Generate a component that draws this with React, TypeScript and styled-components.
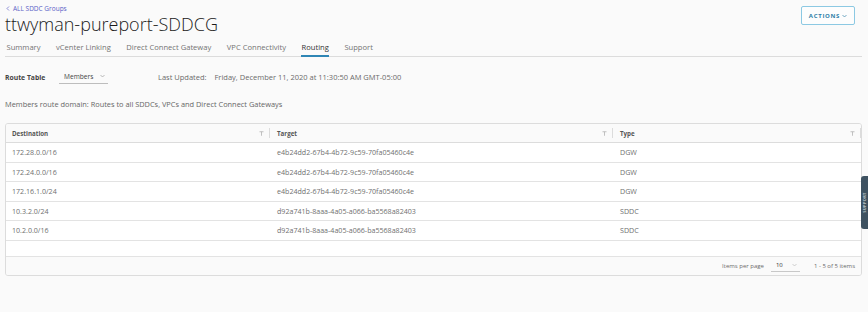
import React from "react";
import styled, { createGlobalStyle } from "styled-components";

const Global = createGlobalStyle`
  html, body { margin: 0; padding: 0; background: #fafafa; }
  body { font-family: "Open Sans", Lato, sans-serif; color: #565656; }
  * { box-sizing: border-box; }
`;

const Page = styled.div`
  width: 868px;
  height: 312px;
  position: relative;
  overflow: hidden;
  background: #fafafa;
  padding: 0 6px 0 5px;
`;

const Header = styled.div`
  display: flex;
  justify-content: space-between;
  align-items: flex-start;
  padding-right: 7px;
`;

const TitleBlock = styled.div`
  display: flex;
  flex-direction: column;
`;

const Breadcrumb = styled.a`
  margin-top: 4px;
  font-size: 6.5px;
  color: #5b5fc7;
  display: flex;
  align-items: center;
  gap: 3px;
  height: 8px;
  padding-left: 1px;
`;

const Title = styled.h1`
  margin: 0;
  font-size: 18px;
  font-weight: 300;
  color: #1b1b1b;
  line-height: 24px;
`;

const ActionsButton = styled.button`
  margin-top: 6px;
  width: 54px;
  height: 19px;
  border: 1px solid #8cc9e3;
  border-radius: 2px;
  background: #fdfdfd;
  color: #2e7fa8;
  font-family: "Open Sans", sans-serif;
  font-weight: 700;
  font-size: 6px;
  letter-spacing: 0.7px;
  display: flex;
  align-items: center;
  justify-content: center;
  gap: 2px;
  padding: 0;
`;

const Tabs = styled.nav`
  display: flex;
  gap: 14.5px;
  margin-top: 7px;
  border-bottom: 1px solid #dcdcdc;
  padding-left: 1px;
`;

const Tab = styled.div<{ $active?: boolean }>`
  font-size: 7.6px;
  color: ${(p) => (p.$active ? "#333" : "#737373")};
  height: 14px;
  line-height: 9px;
  padding: 0 0.5px;
  border-bottom: 2px solid ${(p) => (p.$active ? "#2f86b5" : "transparent")};
  margin-bottom: -1px;
`;

const FilterRow = styled.div`
  display: flex;
  align-items: center;
  margin-top: 13px;
  height: 14px;
`;

const Label = styled.span`
  font-weight: 700;
  font-size: 6.8px;
  color: #444;
  width: 54px;
`;

const Select = styled.div`
  width: 49px;
  height: 13px;
  border-bottom: 1px solid #bdbdbd;
  display: flex;
  align-items: center;
  justify-content: space-between;
  padding: 0 3px 1px 5px;
  color: #444;
  font-size: 6.6px;
  margin-right: 50px;
`;

const Updated = styled.span`
  color: #6b6b6b;
  font-size: 7.5px;
  & b { font-weight: 400; margin-right: 6px; }
`;

const Description = styled.p`
  margin: 15px 0 0 0;
  font-size: 7.4px;
  color: #666;
  line-height: 10px;
`;

const Table = styled.div`
  margin-top: 14px;
  border: 1px solid #dcdcdc;
  border-radius: 3px;
  background: #fff;
  overflow: hidden;
  width: 857px;
`;

const Grid = styled.div`
  display: grid;
  grid-template-columns: 264px 343px 1fr;
`;

const HeadCell = styled.div<{ $first?: boolean }>`
  height: 19px;
  background: #fafafa;
  border-bottom: 1px solid #dcdcdc;
  display: flex;
  align-items: center;
  justify-content: space-between;
  font-size: 6.2px;
  font-weight: 700;
  color: #555;
  padding: 0 6px 0 ${(p) => (p.$first ? "6px" : "7px")};
  position: relative;
  &:not(:last-child)::after {
    content: "";
    position: absolute;
    right: 0;
    top: 4px;
    bottom: 4px;
    width: 1px;
    background: #dcdcdc;
  }
`;

const Cell = styled.div<{ $first?: boolean }>`
  height: 19.5px;
  border-bottom: 1px solid #e3e3e3;
  display: flex;
  align-items: center;
  font-size: 7.1px;
  color: #707070;
  padding-left: ${(p) => (p.$first ? "6px" : "7px")};
`;

const EmptyArea = styled.div`
  height: 15px;
  background: #fff;
`;

const Footer = styled.div`
  height: 19px;
  border-top: 1px solid #e3e3e3;
  background: #fafafa;
  display: flex;
  align-items: center;
  justify-content: flex-end;
  font-size: 6px;
  color: #6a6a6a;
  padding-right: 6px;
`;

const PageSize = styled.div`
  width: 29px;
  height: 12px;
  border-bottom: 1px solid #c8c8c8;
  display: flex;
  align-items: center;
  justify-content: space-between;
  padding: 0 3px 0 5px;
  margin: 0 14px 0 7px;
  color: #333;
  font-size: 6px;
`;

const SupportTab = styled.div`
  position: absolute;
  left: 861px;
  top: 176px;
  width: 7px;
  height: 53px;
  background: #3e5261;
  border-radius: 3px 0 0 3px;
  display: flex;
  align-items: center;
  justify-content: center;
`;

const SupportText = styled.span`
  transform: rotate(-90deg);
  color: #b9c4cc;
  font-size: 4px;
  letter-spacing: 0.3px;
  white-space: nowrap;
  font-weight: 700;
`;

const FilterIcon = () => (
  <svg width="5" height="5" viewBox="0 0 10 10">
    <path d="M1 1.5h8M5 1.5v8" stroke="#b3b3b3" strokeWidth="1.6" fill="none" />
  </svg>
);

const Chevron = ({ color = "#999" }: { color?: string }) => (
  <svg width="5" height="4" viewBox="0 0 10 6">
    <path d="M1 1l4 4 4-4" stroke={color} strokeWidth="1.3" fill="none" />
  </svg>
);

const rows = [
  ["172.28.0.0/16", "e4b24dd2-67b4-4b72-9c59-70fa05460c4e", "DGW"],
  ["172.24.0.0/16", "e4b24dd2-67b4-4b72-9c59-70fa05460c4e", "DGW"],
  ["172.16.1.0/24", "e4b24dd2-67b4-4b72-9c59-70fa05460c4e", "DGW"],
  ["10.3.2.0/24", "d92a741b-8aaa-4a05-a066-ba5568a82403", "SDDC"],
  ["10.2.0.0/16", "d92a741b-8aaa-4a05-a066-ba5568a82403", "SDDC"],
];

const tabs = ["Summary", "vCenter Linking", "Direct Connect Gateway", "VPC Connectivity", "Routing", "Support"];

export default function App() {
  return (
    <>
      <Global />
      <Page>
        <Header>
          <TitleBlock>
            <Breadcrumb>
              <svg width="4" height="5" viewBox="0 0 6 10">
                <path d="M5 1L1 5l4 4" stroke="#5b5fc7" strokeWidth="1.4" fill="none" />
              </svg>
              ALL SDDC Groups
            </Breadcrumb>
            <Title>ttwyman-pureport-SDDCG</Title>
          </TitleBlock>
          <ActionsButton>
            ACTIONS <Chevron color="#2e7fa8" />
          </ActionsButton>
        </Header>
        <Tabs>
          {tabs.map((t) => (
            <Tab key={t} $active={t === "Routing"}>
              {t}
            </Tab>
          ))}
        </Tabs>
        <FilterRow>
          <Label>Route Table</Label>
          <Select>
            Members <Chevron />
          </Select>
          <Updated>
            <b>Last Updated:</b> Friday, December 11, 2020 at 11:30:50 AM GMT-05:00
          </Updated>
        </FilterRow>
        <Description>Members route domain: Routes to all SDDCs, VPCs and Direct Connect Gateways</Description>
        <Table>
          <Grid>
            <HeadCell $first>
              Destination <FilterIcon />
            </HeadCell>
            <HeadCell>
              Target <FilterIcon />
            </HeadCell>
            <HeadCell>
              Type <FilterIcon />
            </HeadCell>
            {rows.map((r, i) => (
              <React.Fragment key={i}>
                <Cell $first>{r[0]}</Cell>
                <Cell>{r[1]}</Cell>
                <Cell>{r[2]}</Cell>
              </React.Fragment>
            ))}
          </Grid>
          <EmptyArea />
          <Footer>
            Items per page
            <PageSize>
              10 <Chevron color="#bbb" />
            </PageSize>
            1 - 5 of 5 items
          </Footer>
        </Table>
        <SupportTab>
          <SupportText>SUPPORT</SupportText>
        </SupportTab>
      </Page>
    </>
  );
}
